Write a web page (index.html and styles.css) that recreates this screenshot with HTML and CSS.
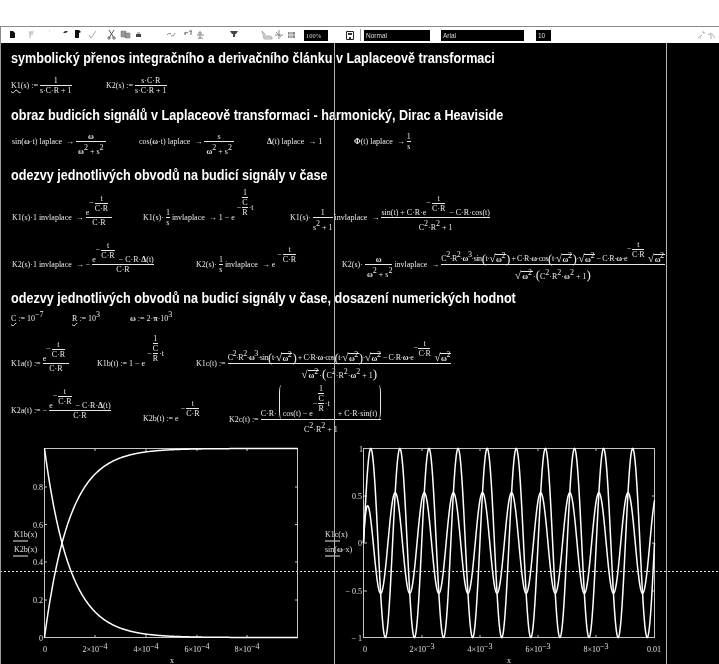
FILE: index.html
```html
<!DOCTYPE html>
<html lang="cs">
<head>
<meta charset="utf-8">
<title>Mathcad</title>
<link rel="stylesheet" href="styles.css">
</head>
<body>
<div class="app">
  <div class="topgap"></div>
  <div class="toolbar">
    <svg class="tb-icons" width="302" height="16" viewBox="1 27 302 16">
      <path d="M10 31h3l2 2v5h-5z" fill="#111"/>
      <path d="M29 32h5M30 32v6M30 34h3" stroke="#aaa" fill="none"/>
      <path d="M49 31h1" stroke="#bbb"/>
      <path d="M63 33l2-2h3l-2 2z" fill="#333"/>
      <path d="M75 30h4l2 2-2 1v5h-4z" fill="#111"/>
      <path d="M89 35l2 3 5-7" stroke="#aaa" fill="none"/>
      <path d="M109 30l5 8M114 30l-5 8" stroke="#555" fill="none"/><circle cx="109" cy="38" r="1.2" fill="none" stroke="#666"/><circle cx="114" cy="38" r="1.2" fill="none" stroke="#666"/>
      <path d="M121 31h5v6h-5zM125 33h5v5h-5z" fill="#999" stroke="#777" stroke-width=".5"/>
      <path d="M136 34h5v3h-5z" fill="#444"/><path d="M137 33h3" stroke="#777"/>
      <path d="M167 35q2-3 4-1M175 33q-1 4-4 3" stroke="#888" fill="none"/>
      <path d="M185 34q1-3 3-1M185 32v3M191 31v4M189 31h3" stroke="#666" fill="none"/>
      <path d="M197 35h7M198 38h5M200 31v8M198 33h4" stroke="#888" fill="none"/>
      <path d="M230 31h8l-2 3h-1v3h-2v-3h-1z" fill="#444"/>
      <path d="M262 31l3 3v3h7v2h-8zM266 36h5" stroke="#999" fill="#ddd" stroke-width=".7"/>
      <path d="M279 30v9M275 35h8M276 32l5 5" stroke="#888" fill="none"/>
      <path d="M288 32h7v6h-7z" fill="#888"/><path d="M290 32v6M292 32v6M288 35h7" stroke="#fff" stroke-width=".7"/>
    </svg>
    <div class="box box-zoom">100%</div>
    <svg class="tb-save" width="8" height="9" viewBox="0 0 8 9"><path d="M.5.5h7v8h-7z" fill="none" stroke="#222"/><path d="M2 2h4v2H2zM3 6h2v2H3z" fill="#333"/></svg>
    <div class="tb-sep"></div>
    <div class="box box-style">Normal</div>
    <div class="box box-font">Arial</div>
    <div class="box box-size">10</div>
    <svg class="tb-right" width="24" height="12" viewBox="0 0 24 12"><path d="M3 9l4-3M7 3h2v2M5 9h1" stroke="#aaa" fill="none"/><path d="M13 6l3-2v6M17 5l3 4" stroke="#aaa" fill="none"/></svg>
  </div>

  <main class="sheet">
    <h2 class="heading h1">symbolický přenos integračního a derivačního článku v Laplaceově transformaci</h2>
    <h2 class="heading h2">obraz budicích signálů v Laplaceově transformaci - harmonický, Dirac a Heaviside</h2>
    <h2 class="heading h3">odezvy jednotlivých obvodů na budicí signály v čase</h2>
    <h2 class="heading h4">odezvy jednotlivých obvodů na budicí signály v čase, dosazení numerických hodnot</h2>

    <div class="eq e1"><span><u>K1</u>(s) :=</span><span class="frac"><span>1</span><span>s·C·R + 1</span></span></div>
    <div class="eq e2"><span>K2(s) :=</span><span class="frac"><span>s·C·R</span><span>s·C·R + 1</span></span></div>

    <div class="eq e3"><span>sin(<b>ω</b>·t) laplace &nbsp;→</span><span class="frac"><span><b>ω</b></span><span class="tall">&nbsp;<b>ω</b><sup>2</sup> + s<sup>2</sup>&nbsp;</span></span></div>
    <div class="eq e4"><span>cos(<b>ω</b>·t) laplace &nbsp;→</span><span class="frac"><span>s</span><span class="tall">&nbsp;<b>ω</b><sup>2</sup> + s<sup>2</sup>&nbsp;</span></span></div>
    <div class="eq e5"><span><b>Δ</b>(t) laplace &nbsp;→ 1</span></div>
    <div class="eq e6"><span><b>Φ</b>(t) laplace &nbsp;→</span><span class="frac"><span>1</span><span>s</span></span></div>

    <div class="eq e7"><span>K1(s)·1 invlaplace &nbsp;→</span><span class="frac"><span class="row">e<span class="exp"><span>−</span><span class="frac"><span>t</span><span>C·R</span></span></span><span class="expgap"></span></span><span>C·R</span></span></div>
    <div class="eq e8"><span>K1(s)·</span><span class="frac"><span>1</span><span>s</span></span><span>invlaplace &nbsp;→ 1 − e</span><span class="exp"><span>−</span><span class="frac"><span class="frac"><span>1</span><span>C</span></span><span>R</span></span><span>·t</span></span></div>
    <div class="eq e9"><span>K1(s)·</span><span class="frac"><span>1</span><span class="tall">s<sup>2</sup> + 1</span></span><span>invlaplace &nbsp;→</span><span class="frac"><span class="row">sin(t) + C·R·e<span class="exp"><span>−</span><span class="frac"><span>t</span><span>C·R</span></span></span><span class="expgap"></span>− C·R·cos(t)</span><span class="tall">C<sup>2</sup>·R<sup>2</sup> + 1</span></span></div>

    <div class="eq e10"><span>K2(s)·1 invlaplace &nbsp;→ −</span><span class="frac"><span class="row">e<span class="exp"><span>−</span><span class="frac"><span>t</span><span>C·R</span></span></span><span class="expgap"></span>− C·R·<b>Δ</b>(t)</span><span>C·R</span></span></div>
    <div class="eq e11"><span>K2(s)·</span><span class="frac"><span>1</span><span>s</span></span><span>invlaplace &nbsp;→ e</span><span class="exp"><span>−</span><span class="frac"><span>t</span><span>C·R</span></span></span></div>
    <div class="eq e12"><span>K2(s)·</span><span class="frac"><span><b>ω</b></span><span class="tall">&nbsp;<b>ω</b><sup>2</sup> + s<sup>2</sup></span></span><span>invlaplace &nbsp;→</span><span class="frac"><span class="row dense">C<sup>2</sup>·R<sup>2</sup>·<b>ω</b><sup>3</sup>·sin<span class="par">(</span>t·<span class="root">√<span><b>ω</b><sup>2</sup></span></span><span class="par">)</span>&nbsp;+ C·R·<b>ω</b>·cos<span class="par">(</span>t·<span class="root">√<span><b>ω</b><sup>2</sup></span></span><span class="par">)</span>·<span class="root">√<span><b>ω</b><sup>2</sup></span></span>&nbsp;− C·R·<b>ω</b>·e<span class="exp"><span>−</span><span class="frac"><span>t</span><span>C·R</span></span></span><span class="expgap"></span><span class="root">√<span><b>ω</b><sup>2</sup></span></span></span><span class="tall"><span class="root">√<span><b>ω</b><sup>2</sup></span></span>·<span class="par">(</span>C<sup>2</sup>·R<sup>2</sup>·<b>ω</b><sup>2</sup> + 1<span class="par">)</span></span></span></div>

    <div class="eq e13"><span><u>C</u> := 10<sup>−7</sup></span></div>
    <div class="eq e14"><span><u>R</u> := 10<sup>3</sup></span></div>
    <div class="eq e15"><span><b>ω</b> := 2·<b>π</b>·10<sup>3</sup></span></div>

    <div class="eq e16"><span>K1a(t) :=</span><span class="frac"><span class="row">e<span class="exp"><span>−</span><span class="frac"><span>t</span><span>C·R</span></span></span><span class="expgap"></span></span><span>C·R</span></span></div>
    <div class="eq e17"><span>K1b(t) := 1 − e</span><span class="exp"><span>−</span><span class="frac"><span class="frac"><span>1</span><span>C</span></span><span>R</span></span><span>·t</span></span></div>
    <div class="eq e18"><span>K1c(t) :=</span><span class="frac"><span class="row dense">C<sup>2</sup>·R<sup>2</sup>·<b>ω</b><sup>3</sup>·sin<span class="par">(</span>t·<span class="root">√<span><b>ω</b><sup>2</sup></span></span><span class="par">)</span>&nbsp;+ C·R·<b>ω</b>·cos<span class="par">(</span>t·<span class="root">√<span><b>ω</b><sup>2</sup></span></span><span class="par">)</span>·<span class="root">√<span><b>ω</b><sup>2</sup></span></span>&nbsp;− C·R·<b>ω</b>·e<span class="exp"><span>−</span><span class="frac"><span>t</span><span>C·R</span></span></span><span class="expgap"></span><span class="root">√<span><b>ω</b><sup>2</sup></span></span></span><span class="tall"><span class="root">√<span><b>ω</b><sup>2</sup></span></span>·<span class="par">(</span>C<sup>2</sup>·R<sup>2</sup>·<b>ω</b><sup>2</sup> + 1<span class="par">)</span></span></span></div>

    <div class="eq e19"><span>K2a(t) := −</span><span class="frac"><span class="row">e<span class="exp"><span>−</span><span class="frac"><span>t</span><span>C·R</span></span></span><span class="expgap"></span>− C·R·<b>Δ</b>(t)</span><span>C·R</span></span></div>
    <div class="eq e20"><span>K2b(t) := e</span><span class="exp"><span>−</span><span class="frac"><span>t</span><span>C·R</span></span></span></div>
    <div class="eq e21"><span>K2c(t) :=</span><span class="frac"><span class="row">C·R·<span class="bigpar-l"></span>cos(t) − e<span class="exp"><span>−</span><span class="frac"><span class="frac"><span>1</span><span>C</span></span><span>R</span></span><span>·t</span></span><span class="expgap2"></span>+ C·R·sin(t)<span class="bigpar-r"></span></span><span class="tall">C<sup>2</sup>·R<sup>2</sup> + 1</span></span></div>

    <svg class="plot plot-a" width="330" height="224" viewBox="0 440 330 224">
      <rect class="frame" x="44.5" y="448.5" width="253" height="189"/>
      <path class="tick" d="M44 487h3M44 524.5h3M44 562h3M44 600h3M298 487h-3M298 524.5h-3M298 562h-3M298 600h-3M95 448v3M146 448v3M197 448v3M247 448v3M95 638v-3M146 638v-3M197 638v-3M247 638v-3"/>
      <polyline id="k1b" class="curve"/><polyline id="k2b" class="curve"/>
      <text class="lab end" x="43" y="490">0.8</text><text class="lab end" x="43" y="528">0.6</text><text class="lab end" x="43" y="565">0.4</text><text class="lab end" x="43" y="603">0.2</text><text class="lab end" x="43" y="641">0</text>
      <text class="lab mid" x="45" y="652">0</text>
      <text class="lab mid" x="95" y="652">2×10<tspan dy="-3">−4</tspan></text>
      <text class="lab mid" x="146" y="652">4×10<tspan dy="-3">−4</tspan></text>
      <text class="lab mid" x="197" y="652">6×10<tspan dy="-3">−4</tspan></text>
      <text class="lab mid" x="247" y="652">8×10<tspan dy="-3">−4</tspan></text>
      <text class="lab mid" x="172" y="663">x</text>
      <text class="lab" x="14" y="537">K1b(x)</text><path class="leg" d="M13 541h15"/>
      <text class="lab" x="14" y="552">K2b(x)</text><path class="leg" d="M13 556h15"/>
    </svg>

    <svg class="plot plot-b" width="350" height="224" viewBox="320 440 350 224">
      <rect class="frame" x="363.5" y="448.5" width="291" height="189"/>
      <path class="tick" d="M364 496h3M364 543h3M364 591h3M655 496h-3M655 543h-3M655 591h-3M422 448v3M480 448v3M538 448v3M596 448v3M422 638v-3M480 638v-3M538 638v-3M596 638v-3"/>
      <polyline id="sinw" class="curve"/><polyline id="k1c" class="curve"/>
      <text class="lab end" x="363" y="452">1</text><text class="lab end" x="362" y="499">0.5</text><text class="lab end" x="362" y="546">0</text><text class="lab end" x="362" y="594">− 0.5</text><text class="lab end" x="362" y="641">− 1</text>
      <text class="lab mid" x="365" y="652">0</text>
      <text class="lab mid" x="422" y="652">2×10<tspan dy="-3">−3</tspan></text>
      <text class="lab mid" x="480" y="652">4×10<tspan dy="-3">−3</tspan></text>
      <text class="lab mid" x="538" y="652">6×10<tspan dy="-3">−3</tspan></text>
      <text class="lab mid" x="596" y="652">8×10<tspan dy="-3">−3</tspan></text>
      <text class="lab mid" x="654" y="652">0.01</text>
      <text class="lab mid" x="509" y="663">x</text>
      <text class="lab" x="325" y="537">K1c(x)</text><path class="leg" d="M325 541h15"/>
      <text class="lab" x="325" y="552">sin(<tspan font-weight="bold">ω</tspan>·x)</text><path class="leg" d="M325 556h15"/>
    </svg>

    <div class="vline v1"></div>
    <div class="vline v2"></div>
    <div class="hline"></div>
  </main>
</div>
<script src="plots.js"></script>
</body>
</html>
```

FILE: styles.css
```css
* { box-sizing: border-box; }
html, body { margin: 0; padding: 0; background: #fff; }
body { width: 719px; height: 664px; overflow: hidden; font-family: "Liberation Serif", serif; }
.app { width: 719px; height: 664px; display: flex; flex-direction: column; filter: blur(.5px); }
.topgap { height: 26px; flex: none; }

.toolbar { height: 17px; flex: none; display: flex; align-items: center; background: #fff; border-top: 1px solid #8a8a8a; border-left: 1px solid #8a8a8a; font-family: "Liberation Sans", sans-serif; }
.tb-icons { flex: none; }
.box { background: #000; color: #ddd; font-size: 6.5px; height: 11px; line-height: 11px; padding-left: 2px; flex: none; }
.box-zoom { width: 24px; margin-left: 1px; font-family: "Liberation Serif", serif; }
.tb-save { margin-left: 18px; flex: none; }
.tb-sep { width: 1px; height: 12px; background: #999; margin-left: 6px; flex: none; }
.box-style { width: 66px; margin-left: 3px; }
.box-font { width: 83px; margin-left: 11px; }
.box-size { width: 15px; margin-left: 12px; }
.tb-right { margin-left: auto; margin-right: 0; flex: none; }

.sheet { position: relative; flex: 1; background: #000; border-left: 1px solid #9a9a9a; color: #e8e8e8; font-size: 8px; line-height: 9px; overflow: hidden; }

.heading { position: absolute; left: 10px; margin: 0; font: bold 14px/16px "Liberation Sans", sans-serif; color: #fff; white-space: nowrap; transform: scaleX(.9); transform-origin: left center; }
.h1 { top: 7px; }
.h2 { top: 64px; }
.h3 { top: 124px; }
.h4 { top: 247px; }

.eq { position: absolute; height: 0; display: flex; align-items: center; gap: 2px; white-space: nowrap; }
.e1 { left: 10px; top: 42px; }
.e2 { left: 105px; top: 42px; }
.e3 { left: 11px; top: 98px; }
.e4 { left: 138px; top: 98px; }
.e5 { left: 266px; top: 98px; }
.e6 { left: 353px; top: 98px; }
.e7 { left: 11px; top: 174px; }
.e8 { left: 142px; top: 174px; }
.e9 { left: 289px; top: 174px; }
.e10 { left: 11px; top: 221px; }
.e11 { left: 195px; top: 221px; }
.e12 { left: 341px; top: 221px; }
.e13 { left: 10px; top: 275px; }
.e14 { left: 71px; top: 275px; }
.e15 { left: 129px; top: 275px; }
.e16 { left: 10px; top: 320px; }
.e17 { left: 96px; top: 320px; }
.e18 { left: 195px; top: 320px; }
.e19 { left: 10px; top: 367px; }
.e20 { left: 142px; top: 375px; }
.e21 { left: 228px; top: 376px; }

.frac { display: inline-grid; grid-template-rows: 1fr 1fr; justify-items: center; }
.frac > span:first-child { align-self: end; }
.frac > span:last-child { align-self: start; width: 100%; text-align: center; border-top: 1px solid #e8e8e8; }
.frac > .tall:last-child { padding-top: 5px; }
.row { display: flex; align-items: center; justify-content: center; }
.dense { letter-spacing: -.46px; }
.exp { display: inline-flex; align-items: center; height: 0; gap: 1px; transform: translateY(-10px); }
.expgap { width: 18px; flex: none; margin-left: -18px; }
.row > .exp + .expgap { margin-left: 2px; width: 2px; }
.expgap2 { width: 8px; flex: none; }
u { text-decoration: underline wavy #e8e8e8 1px; text-underline-offset: 1px; text-decoration-skip-ink: none; }
b { font-weight: bold; }
sup { font-size: 8px; line-height: 0; vertical-align: 4px; margin-bottom: 7px; }
.par { font-size: 13px; line-height: 9px; font-weight: normal; }
.root { display: inline-flex; align-items: center; font-size: 11px; line-height: 11px; }
.root > span { font-size: 8px; line-height: 9px; border-top: 1px solid #e8e8e8; padding: 0 1px; }
.bigpar-l, .bigpar-r { display: inline-block; width: 4px; height: 34px; flex: none; margin-top: -22px; }
.bigpar-l { border-left: 1px solid #e8e8e8; border-radius: 4px / 17px; margin-left: 2px; }
.bigpar-r { border-right: 1px solid #e8e8e8; border-radius: 4px / 17px; }

.plot { position: absolute; display: block; font-family: "Liberation Serif", serif; }
.plot-a { left: -1px; top: 397px; }
.plot-b { left: 319px; top: 397px; }
.frame { fill: none; stroke: #c4c4c4; }
.tick { fill: none; stroke: #c4c4c4; }
.curve { fill: none; stroke: #fff; stroke-width: 1.5; }
.lab { fill: #e0e0e0; font-size: 8px; }
.end { text-anchor: end; }
.mid { text-anchor: middle; }
.leg { stroke: #e8e8e8; fill: none; }

.vline { position: absolute; top: 0; bottom: 0; width: 1px; background: #b4b4b4; }
.v1 { left: 333px; }
.v2 { left: 665px; }
.hline { position: absolute; left: -1px; right: 0; top: 528px; height: 1px; background: repeating-linear-gradient(90deg, #e4e4e4 0 2px, transparent 2px 4px); }
```

FILE: plots.js
```js
function fill(id, n, fx) {
  var pts = [];
  for (var i = 0; i <= n; i++) {
    var p = fx(i / n);
    pts.push(p[0].toFixed(2) + "," + p[1].toFixed(2));
  }
  document.getElementById(id).setAttribute("points", pts.join(" "));
}
var RC = 1e-4, W = 2 * Math.PI * 1e3;
function pa(u, v) { return [44.5 + u * 253, 637.5 - v * 189]; }
function pb(u, v) { return [363.5 + u * 291, 543 - v * 94.5]; }
fill("k1b", 300, function (u) { return pa(u, 1 - Math.exp(-u * 1e-3 / RC)); });
fill("k2b", 300, function (u) { return pa(u, Math.exp(-u * 1e-3 / RC)); });
fill("sinw", 800, function (u) { return pb(u, Math.sin(W * u * 0.01)); });
var wrc = W * RC, A = wrc / Math.sqrt(1 + wrc * wrc), phi = Math.atan(1 / wrc);
fill("k1c", 800, function (u) {
  var t = u * 0.01;
  return pb(u, A * Math.sin(W * t + phi) - A * Math.sin(phi) * Math.exp(-t / RC));
});
```
